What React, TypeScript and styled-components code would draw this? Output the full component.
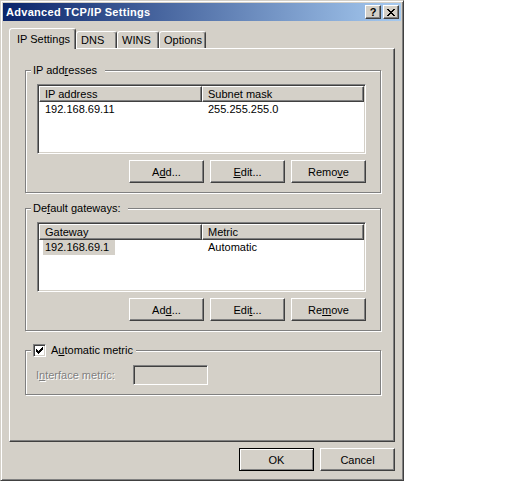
import styled, { createGlobalStyle } from "styled-components";

const face = "#d4d0c8";
const shadow = "#808080";
const dark = "#404040";

const Global = createGlobalStyle`
  body { margin: 0; background: #fff; }
  * { box-sizing: border-box; }
`;

const Window = styled.div`
  width: 404px;
  height: 481px;
  padding: 2px;
  display: flex;
  flex-direction: column;
  background: ${face};
  border: 1px solid;
  border-color: ${face} ${dark} ${dark} ${face};
  box-shadow: inset 1px 1px #fff, inset -1px -1px ${shadow};
  font: 11px "Liberation Sans", Arial, sans-serif;
  color: #000;
`;

const TitleBar = styled.div`
  height: 18px;
  display: flex;
  align-items: center;
  gap: 2px;
  padding: 0 2px 0 3px;
  background: linear-gradient(to right, #0a246a, #a6caf0);
  color: #fff;
  font-weight: bold;
`;

const Title = styled.div`
  flex: 1;
  letter-spacing: 0.3px;
`;

const CaptionButton = styled.div`
  width: 16px;
  height: 14px;
  display: flex;
  align-items: center;
  justify-content: center;
  background: ${face};
  border: 1px solid;
  border-color: #fff ${dark} ${dark} #fff;
  box-shadow: inset -1px -1px ${shadow};
  color: #000;
  font-size: 11px;
  font-weight: bold;
  line-height: 1;
`;

const Body = styled.div`
  display: flex;
  flex-direction: column;
  padding: 7px 6px 0;
`;

const TabStrip = styled.div`
  height: 20px;
  display: flex;
  align-items: flex-end;
`;

const Tab = styled.div<{ $w: number; $active?: boolean }>`
  position: relative;
  width: ${(p) => p.$w}px;
  height: ${(p) => (p.$active ? 21 : 17)}px;
  margin-bottom: ${(p) => (p.$active ? -1 : 0)}px;
  z-index: ${(p) => (p.$active ? 1 : 0)};
  padding: ${(p) => (p.$active ? "4px 0 0 7px" : "2px 0 0 4px")};
  background: ${face};
  border-style: solid;
  border-width: 1px 1px 0 1px;
  border-color: #fff ${dark} transparent #fff;
  border-radius: 3px 3px 0 0;
  box-shadow: inset -1px 0 ${shadow};
  line-height: 13px;
  white-space: nowrap;
`;

const Panel = styled.div`
  height: 394px;
  display: flex;
  flex-direction: column;
  padding: 21px 13px 0 15px;
  border: 1px solid;
  border-color: #fff ${dark} ${dark} #fff;
  box-shadow: inset -1px -1px ${shadow};
`;

const Group = styled.div<{ $top: number }>`
  display: flex;
  flex-direction: column;
  margin-top: ${(p) => p.$top}px;
  padding: 0 14px 9px 11px;
  border: 1px solid ${shadow};
  box-shadow: 1px 1px 0 #fff, inset 1px 1px 0 #fff;
`;

const Legend = styled.div<{ $right?: number }>`
  align-self: flex-start;
  display: flex;
  align-items: center;
  gap: 5px;
  height: 13px;
  margin: -7px 0 0 -6px;
  padding: 0 ${(p) => p.$right ?? 8}px 0 2px;
  background: ${face};
  line-height: 13px;
  white-space: nowrap;
`;

const ListView = styled.div`
  height: 70px;
  margin-top: 7px;
  background: #fff;
  border: 1px solid;
  border-color: ${shadow} #fff #fff ${shadow};
  box-shadow: inset 1px 1px ${dark}, inset -1px -1px ${face};
  padding: 1px;
`;

const Columns = styled.div`
  display: grid;
  grid-template-columns: 163px 162px;
`;

const HeaderCell = styled.div`
  height: 16px;
  padding-left: 5px;
  background: ${face};
  border: 1px solid;
  border-color: #fff ${dark} ${dark} #fff;
  box-shadow: inset -1px -1px ${shadow};
  line-height: 14px;
`;

const Cell = styled.div<{ $pad?: number }>`
  height: 15px;
  padding-left: ${(p) => p.$pad ?? 6}px;
  line-height: 15px;
  white-space: nowrap;
`;

const Selected = styled.span`
  display: inline-block;
  padding: 0 6px 0 2px;
  background: ${face};
`;

const ButtonRow = styled.div`
  display: flex;
  justify-content: flex-end;
  gap: 6px;
  margin-top: 6px;
`;

const Button = styled.div<{ $default?: boolean }>`
  width: 75px;
  height: 23px;
  display: flex;
  align-items: center;
  justify-content: center;
  background: ${face};
  border: 1px solid;
  border-color: ${(p) => (p.$default ? "#000" : `#fff ${dark} ${dark} #fff`)};
  box-shadow: ${(p) =>
    p.$default
      ? `inset 1px 1px #fff, inset -1px -1px ${shadow}`
      : `inset -1px -1px ${shadow}`};
`;

const CheckBox = styled.div`
  width: 13px;
  height: 13px;
  display: flex;
  align-items: center;
  justify-content: center;
  background: #fff;
  border: 1px solid;
  border-color: ${shadow} #fff #fff ${shadow};
  box-shadow: inset 1px 1px ${dark}, inset -1px -1px ${face};
`;

const MetricRow = styled.div`
  display: flex;
  align-items: center;
  margin: 8px 0 0 -1px;
`;

const Disabled = styled.div`
  width: 97px;
  color: ${shadow};
  text-shadow: 1px 1px 0 #fff;
`;

const Field = styled.div`
  width: 75px;
  height: 20px;
  background: ${face};
  border: 1px solid;
  border-color: ${shadow} #fff #fff ${shadow};
  box-shadow: inset 1px 1px ${dark}, inset -1px -1px ${face};
`;

const Footer = styled.div`
  display: flex;
  justify-content: flex-end;
  gap: 6px;
  margin-top: 6px;
`;

const checkCols = [2, 3, 4, 3, 2, 1, 0];

const Check = () => (
  <svg width="7" height="7" viewBox="0 0 7 7" shapeRendering="crispEdges">
    {checkCols.map((y, x) => (
      <rect key={x} x={x} y={y} width="1" height="3" fill="#000" />
    ))}
  </svg>
);

const CloseGlyph = () => (
  <svg width="8" height="7" viewBox="0 0 8 7" shapeRendering="crispEdges">
    <path
      fill="#000"
      d="M0 0h2v1H0zM6 0h2v1H6zM1 1h2v1H1zM5 1h2v1H5zM2 2h4v1H2zM3 3h2v1H3zM2 4h4v1H2zM1 5h2v1H1zM5 5h2v1H5zM0 6h2v1H0zM6 6h2v1H6z"
    />
  </svg>
);

export default function App() {
  return (
    <>
      <Global />
      <Window>
        <TitleBar>
          <Title>Advanced TCP/IP Settings</Title>
          <CaptionButton>?</CaptionButton>
          <CaptionButton>
            <CloseGlyph />
          </CaptionButton>
        </TitleBar>
        <Body>
          <TabStrip>
            <Tab $w={67} $active>
              IP Settings
            </Tab>
            <Tab $w={41}>DNS</Tab>
            <Tab $w={42}>WINS</Tab>
            <Tab $w={47}>Options</Tab>
          </TabStrip>
          <Panel>
            <Group $top={0}>
              <Legend>
                <span>
                  IP add<u>r</u>esses
                </span>
              </Legend>
              <ListView>
                <Columns>
                  <HeaderCell>IP address</HeaderCell>
                  <HeaderCell>Subnet mask</HeaderCell>
                  <Cell>192.168.69.11</Cell>
                  <Cell>255.255.255.0</Cell>
                </Columns>
              </ListView>
              <ButtonRow>
                <Button>
                  <span>
                    A<u>d</u>d...
                  </span>
                </Button>
                <Button>
                  <span>
                    <u>E</u>dit...
                  </span>
                </Button>
                <Button>
                  <span>
                    Remo<u>v</u>e
                  </span>
                </Button>
              </ButtonRow>
            </Group>
            <Group $top={15}>
              <Legend>
                <span>
                  De<u>f</u>ault gateways:
                </span>
              </Legend>
              <ListView>
                <Columns>
                  <HeaderCell>Gateway</HeaderCell>
                  <HeaderCell>Metric</HeaderCell>
                  <Cell $pad={4}>
                    <Selected>192.168.69.1</Selected>
                  </Cell>
                  <Cell>Automatic</Cell>
                </Columns>
              </ListView>
              <ButtonRow>
                <Button>
                  <span>
                    Ad<u>d</u>...
                  </span>
                </Button>
                <Button>
                  <span>
                    Edi<u>t</u>...
                  </span>
                </Button>
                <Button>
                  <span>
                    Re<u>m</u>ove
                  </span>
                </Button>
              </ButtonRow>
            </Group>
            <Group $top={19}>
              <Legend $right={3}>
                <CheckBox>
                  <Check />
                </CheckBox>
                <span>
                  A<u>u</u>tomatic metric
                </span>
              </Legend>
              <MetricRow>
                <Disabled>
                  I<u>n</u>terface metric:
                </Disabled>
                <Field />
              </MetricRow>
            </Group>
          </Panel>
          <Footer>
            <Button $default>OK</Button>
            <Button>Cancel</Button>
          </Footer>
        </Body>
      </Window>
    </>
  );
}
